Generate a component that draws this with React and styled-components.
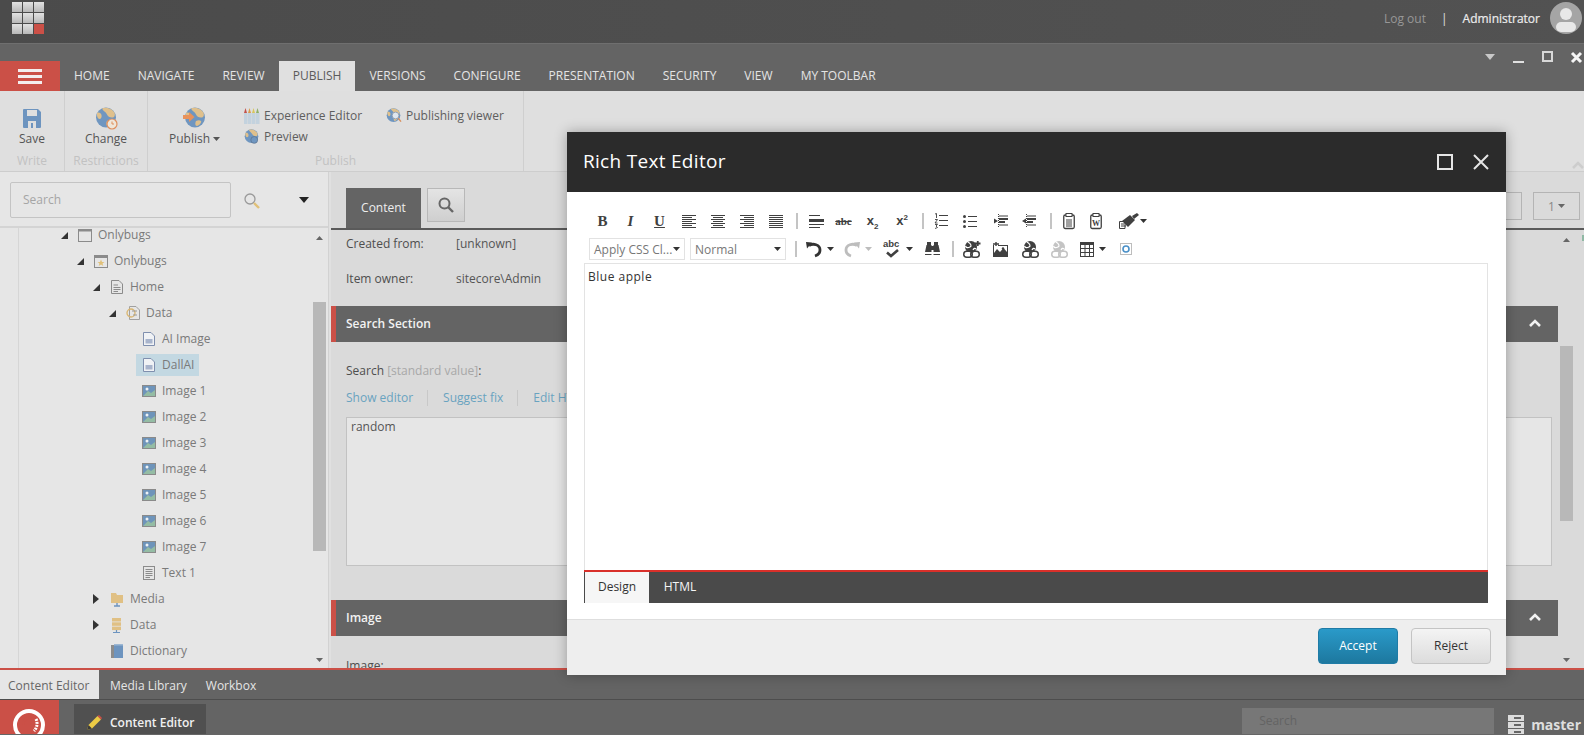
import React from 'react';
import styled, { createGlobalStyle } from 'styled-components';

const GlobalStyle = createGlobalStyle`
  html, body {
    margin: 0;
    padding: 0;
    overflow: hidden;
    background: #666;
  }
  * {
    box-sizing: border-box;
  }
`;

const navItems = ['HOME', 'NAVIGATE', 'REVIEW', 'PUBLISH', 'VERSIONS', 'CONFIGURE', 'PRESENTATION', 'SECURITY', 'VIEW', 'MY TOOLBAR'];

/* ---------- small drawn icons ---------- */

const Svg = ({ w = 16, h = 16, children, ...rest }) => (
  <svg width={w} height={h} viewBox={`0 0 ${w} ${h}`} style={{ display: 'block', overflow: 'visible', flex: 'none' }} {...rest}>
    {children}
  </svg>
);

const Tri = ({ color = '#333', w = 7, h = 4 }) => (
  <Svg w={w} h={h}><path d={`M0 0H${w}L${w / 2} ${h}Z`} fill={color} /></Svg>
);

const Globe = ({ size = 22, badge }) => (
  <Svg w={size} h={size}>
    <g transform={`scale(${size / 22})`}>
      <circle cx="11" cy="10.5" r="10" fill="#6f96c0" />
      <path d="M7 1.5C10 0 16 1 19 5c1.500 2 1 5-1 5.500-3 .5-5-1-6-3C11 5 8 4 7 1.500Z" fill="#dfc08c" />
      <path d="M2 6c2-1 4 0 4.500 2S6 12 4.500 12 1.500 9 2 6ZM12 14c2-1 4-1 5 0s-2 5-4 5-2-3-1-5Z" fill="#dfc08c" />
      {badge === 'clock' && (
        <g>
          <circle cx="17" cy="17" r="5" fill="#efe6d8" stroke="#df8f5c" strokeWidth="1.200" />
          <path d="M17 14.500V17H19" fill="none" stroke="#df8f5c" strokeWidth="1" />
        </g>
      )}
      {badge === 'arrow' && <path d="M-1 8H5V5L10.500 10 5 15V12H-1Z" fill="#e8925c" />}
      {badge === 'lens' && (
        <g>
          <circle cx="14" cy="11" r="5" fill="#dfe6ee" stroke="#8f9db0" strokeWidth="1.400" />
          <path d="M18 15L22 20" stroke="#d98f5c" strokeWidth="2" />
        </g>
      )}
      {badge === 'eye' && <circle cx="15" cy="16" r="5" fill="#6f96c0" stroke="#596f8a" strokeWidth="1" />}
    </g>
  </Svg>
);

const SaveIcon = () => (
  <Svg w={18} h={19}>
    <path fillRule="evenodd" d="M1 0H15L18 3V18A1 1 0 0 1 17 19H1A1 1 0 0 1 0 18V1A1 1 0 0 1 1 0ZM4 1V7H14V1ZM5 12V19H13V12ZM8 14H10V19H8Z" fill="#6d94bf" />
  </Svg>
);

const CrayonIcon = () => (
  <Svg w={15} h={17}>
    {[['#c4524a', 0], ['#d99a4d', 4], ['#d8c65a', 8], ['#8fb06a', 12]].map(([c, x]) => (
      <g key={c}>
        <path d={`M${x} 6L${x + 1.500} 1L${x + 3} 6Z`} fill={c} />
        <rect x={x} y="6" width="3.500" height="11" fill="#c3d2de" />
      </g>
    ))}
  </Svg>
);

const LensIcon = () => (
  <Svg w={16} h={16}>
    <circle cx="6" cy="6" r="5" fill="none" stroke="#9a9a9a" strokeWidth="1.300" />
    <path d="M10 10L15 15" stroke="#e0c078" strokeWidth="2.400" />
  </Svg>
);

const DarkLens = () => (
  <Svg w={16} h={16}>
    <circle cx="6.500" cy="6.500" r="5" fill="none" stroke="#666" strokeWidth="2" />
    <path d="M10 10L15 15" stroke="#666" strokeWidth="2.400" />
  </Svg>
);

const CloseX = ({ size = 16, color = '#e6e6e6', width = 2 }) => (
  <Svg w={size} h={size}>
    <path d={`M1 1L${size - 1} ${size - 1}M${size - 1} 1L1 ${size - 1}`} stroke={color} strokeWidth={width} />
  </Svg>
);

const Chevron = ({ color = '#f2f2f2' }) => (
  <Svg w={12} h={8}>
    <path d="M1 7L6 2 11 7" fill="none" stroke={color} strokeWidth="2.600" />
  </Svg>
);

/* tree icons */
const WindowIcon = () => (
  <Svg w={14} h={14}>
    <rect x=".5" y="1.500" width="13" height="12" fill="none" stroke="#8b8b8b" />
    <rect x=".5" y="1.500" width="13" height="2" fill="#8b8b8b" />
  </Svg>
);

const StarWindow = () => (
  <Svg w={14} h={14}>
    <rect x=".5" y="1.500" width="13" height="12" fill="none" stroke="#8b8b8b" />
    <rect x=".5" y="1.500" width="13" height="2.500" fill="#8b8b8b" />
    <path d="M7 5.500L8 8H10.500L8.500 9.500 9.300 12 7 10.500 4.700 12 5.500 9.500 3.500 8H6Z" fill="#e0c078" />
  </Svg>
);

const DocIcon = () => (
  <Svg w={12} h={14}>
    <path d="M.5.5H8L11.500 4V13.500H.5Z" fill="none" stroke="#8b8b8b" />
    <path d="M2.500 5H7M2.500 7.500H9.500M2.500 9.500H9.500M2.500 11.500H7" stroke="#8b8b8b" />
  </Svg>
);

const DataDocIcon = () => (
  <Svg w={14} h={14}>
    <path d="M3.500.5H10L13.500 4V13.500H3.500Z" fill="none" stroke="#a0a0a0" />
    <circle cx="5" cy="7" r="4" fill="none" stroke="#d9b56f" strokeWidth="1.300" />
    <path d="M6 5H11M7 9H11" stroke="#9a9a9a" />
  </Svg>
);

const BlueDoc = () => (
  <Svg w={12} h={14}>
    <path d="M.5.5H8L11.500 4V13.500H.5Z" fill="#f0f2f5" stroke="#7f8fae" />
    <rect x="2.500" y="7" width="7" height="4.500" fill="#a8b4cc" />
  </Svg>
);

const ImageIcon = () => (
  <Svg w={14} h={12}>
    <rect x=".5" y=".5" width="13" height="11" fill="#6e94ba" stroke="#8a8a8a" />
    <path d="M1 11L6 6 9 8 13 5V11Z" fill="#94bca4" />
    <circle cx="5" cy="4" r="1.500" fill="#eef2f5" />
  </Svg>
);

const TextIcon = () => (
  <Svg w={12} h={14}>
    <rect x=".5" y=".5" width="11" height="13" fill="none" stroke="#8b8b8b" />
    <path d="M2.500 3.500H9.500M2.500 5.500H9.500M2.500 7.500H9.500M2.500 9.500H9.500M2.500 11.500H7" stroke="#8b8b8b" />
  </Svg>
);

const MediaIcon = () => (
  <Svg w={12} h={15}>
    <path d="M0 1H5L6 3H12V11H0Z" fill="#e0c084" />
    <path d="M6 11V14M3 14H9" stroke="#6d94bf" strokeWidth="1.400" />
  </Svg>
);

const ServerIcon = () => (
  <Svg w={10} h={15}>
    <rect x="0" y="0" width="9" height="3.500" fill="#e0c084" />
    <rect x="0" y="4.300" width="9" height="3.500" fill="#e0c084" />
    <rect x="0" y="8.600" width="9" height="3.500" fill="#e0c084" />
    <path d="M4.500 12V14.500M1 14.500H8" stroke="#6d94bf" strokeWidth="1.200" />
  </Svg>
);

const BookIcon = () => (
  <Svg w={12} h={15}>
    <rect x="0" y="1" width="3" height="13" fill="#8c8c8c" />
    <rect x="3" y="1" width="9" height="13" fill="#6d94bf" />
    <rect x="3" y="0" width="9" height="1.500" fill="#9db7d3" />
  </Svg>
);

/* toolbar icons */
const ink = '#404040';

const Lines = ({ rows, width = 1 }) => (
  <Svg w={15} h={13}>
    {rows.map(([a, b], i) => (
      <path key={i} d={`M${a} ${i * (12 / (rows.length - 1)) + 0.5}H${b}`} stroke={ink} strokeWidth={width} />
    ))}
  </Svg>
);

const alignLeft = [[0, 14], [0, 10], [0, 14], [0, 10], [0, 14], [0, 10], [0, 14]];
const alignCenter = [[0, 14], [2, 12], [0, 14], [2, 12], [0, 14], [2, 12], [0, 14]];
const alignRight = [[0, 14], [4, 14], [0, 14], [4, 14], [0, 14], [4, 14], [0, 14]];
const alignFull = [[0, 14], [0, 14], [0, 14], [0, 14], [0, 14], [0, 14], [0, 14]];

const RuleIcon = () => (
  <Svg w={15} h={13}>
    <path d="M0 .5H11M0 12.500H11M0 9.500H15" stroke={ink} />
    <rect x="0" y="4" width="15" height="3" fill={ink} />
  </Svg>
);

const ListOrdered = () => (
  <Svg w={14} h={16}>
    <path d="M1 1L2.500 .5V5M1 6.500H3.500L1 10H3.500M1 11.500H3.500L2 13 3.500 14.500 1 15.500" fill="none" stroke={ink} strokeWidth=".9" />
    <path d="M5 2.500H14M5 7.500H14M5 12.500H14" stroke={ink} />
  </Svg>
);

const ListBullet = () => (
  <Svg w={14} h={13}>
    <circle cx="1.500" cy="1.500" r="1.500" fill={ink} />
    <circle cx="1.500" cy="6.500" r="1.500" fill={ink} />
    <circle cx="1.500" cy="11.500" r="1.500" fill={ink} />
    <path d="M5 1.500H14M5 6.500H14M5 11.500H14" stroke={ink} />
  </Svg>
);

// both buttons keep the lines on the right, only the arrow turns round
const Indent = ({ back }) => (
  <Svg w={14} h={14}>
    <path d={back ? 'M4 4.500L0 7 4 9.500Z' : 'M0 4.500L4 7 0 9.500Z'} fill={ink} />
    <path d="M4.500 0V14" stroke={ink} strokeDasharray="1 1" />
    <path d="M5 2H14" stroke={ink} />
    <rect x="5" y="4" width="9" height="2" fill={ink} />
    <rect x="5" y="7" width="6" height="2" fill={ink} />
    <path d="M5 11H14" stroke={ink} />
  </Svg>
);

const Clipboard = ({ word }) => (
  <Svg w={12} h={16}>
    <rect x=".75" y="2" width="10.500" height="13.500" rx="1.500" fill="none" stroke={ink} strokeWidth="1.300" />
    <rect x="3" y=".5" width="6" height="3" fill="#fff" stroke={ink} />
    {!word && <path d="M3 7H9M3 9H9M3 11H9M3 13H9" stroke={ink} />}
    {word && <text x="6" y="12.500" fontSize="8" fontFamily="Liberation Serif, serif" fontWeight="700" textAnchor="middle" fill={ink}>W</text>}
  </Svg>
);

const BrushIcon = () => (
  <Svg w={20} h={16}>
    <path d="M.5 8.500H6V15.500H.5Z" fill="none" stroke={ink} />
    <path d="M3 8L11 2 16 7 9 14Z" fill={ink} />
    <path d="M13 3L18 0 20 2 15 6Z" fill={ink} />
    <path d="M2 11H5M2 13H7" stroke={ink} />
  </Svg>
);

const UndoIcon = ({ redo, color = '#333' }) => (
  <Svg w={16} h={15}>
    <g transform={redo ? 'translate(16 0) scale(-1 1)' : undefined}>
      <path d="M0 0L6 .5 1 6.500Z" fill={color} />
      <path d="M3 3.500C7 1 14 2.500 14 8c0 3-2 5-5 6" fill="none" stroke={color} strokeWidth="2.800" />
    </g>
  </Svg>
);

const SpellIcon = () => (
  <Svg w={18} h={17}>
    <path d="M4 11.500L8 15 15 9" fill="none" stroke={ink} strokeWidth="2.600" />
  </Svg>
);

const Binoculars = () => (
  <Svg w={15} h={14}>
    <rect x="2" y="0" width="4" height="3" fill={ink} />
    <rect x="9" y="0" width="4" height="3" fill={ink} />
    <path d="M1.500 3H6.500V10H0ZM8.500 3H13.500L15 10H8.500ZM6.500 4H8.500V8H6.500Z" fill={ink} />
    <path d="M0 12.500H6.500M8.500 12.500H15" stroke={ink} />
  </Svg>
);

const LinkGlobe = ({ color = ink, plus }) => (
  <Svg w={17} h={17}>
    <circle cx="8" cy="6" r="6" fill={color} />
    <path d="M5 1C8 3 9 5 7 6S3 7 2.500 5M10 9c1-2 2-2 3-1" fill="none" stroke="#fff" strokeWidth="1.200" />
    <rect x=".75" y="10.250" width="8.500" height="6" rx="3" fill="#fff" stroke={color} strokeWidth="1.500" />
    <rect x="7.750" y="10.250" width="8.500" height="6" rx="3" fill="none" stroke={color} strokeWidth="1.500" />
    {plus && <path d="M12 2.500H17.500M14.750 0V5" stroke={color} strokeWidth="1.800" />}
  </Svg>
);

const PictureIcon = () => (
  <Svg w={15} h={15}>
    <rect x="0" y="3" width="15" height="12" fill={ink} />
    <path d="M1 11L4 7 7 10 10.500 6 14 10V4H5V3H1Z" fill="#fff" />
    <path d="M0 2H6M3 0V4" stroke={ink} strokeWidth="1.400" />
    <circle cx="10" cy="6.500" r="1.200" fill={ink} />
  </Svg>
);

const TableIcon = () => (
  <Svg w={14} h={15}>
    <rect x=".5" y=".5" width="13" height="14" fill="none" stroke={ink} />
    <rect x="0" y="0" width="14" height="3" fill={ink} />
    <path d="M5 3V15M9.500 3V15M0 6.500H14M0 10.500H14" stroke={ink} />
  </Svg>
);

const SelectAll = () => (
  <Svg w={12} h={12}>
    <rect x=".5" y=".5" width="11" height="11" fill="none" stroke="#7a7a7a" strokeDasharray="1 1" />
    <circle cx="6" cy="6" r="3" fill="none" stroke="#4a90c8" strokeWidth="1.600" />
  </Svg>
);

const SitecoreLogo = () => (
  <Svg w={32} h={32}>
    <circle cx="16" cy="16" r="14" fill="none" stroke="#fff" strokeWidth="4" />
    <path d="M10 16a7 7 0 0 1 11-6" fill="none" stroke="#cb5047" strokeWidth="2" />
    <path d="M23 10c2 4 1 9-2 12" fill="none" stroke="#fff" strokeWidth="3" strokeDasharray="2 1" />
  </Svg>
);

const PencilIcon = () => (
  <Svg w={15} h={15}>
    <path d="M0 15L1.500 10 10.500 1 14 4.500 5 13.500Z" fill="#eccb45" />
    <path d="M10.500 1L12 0 15 3 14 4.500Z" fill="#cb5047" />
    <path d="M0 15L1.500 10 5 13.500Z" fill="#3c3c3c" />
  </Svg>
);

const MasterIcon = () => (
  <Svg w={16} h={22}>
    {[0, 7, 14].map((y) => (
      <g key={y}>
        <rect x="0" y={y} width="16" height="6" fill="#dcdcdc" />
        <rect x="6" y={y + 2} width="7" height="2" fill="#666" />
      </g>
    ))}
  </Svg>
);

/* ---------- page ---------- */

const Page = styled.div`
  width: 1584px;
  height: 735px;
  position: relative;
  overflow: hidden;
  display: flex;
  flex-direction: column;
  font-family: 'Open Sans', 'Liberation Sans', sans-serif;
  font-size: 12px;
  color: #555;
`;

const TopBar = styled.header`
  height: 44px;
  flex: none;
  display: flex;
  align-items: flex-start;
  padding: 2px 2px 0 12px;
  background: linear-gradient(to right, #4b4b4b, #525252);
  border-bottom: 1px solid #6f6f6f;
`;

const AppGrid = styled.div`
  display: grid;
  grid-template-columns: repeat(3, 10px);
  grid-auto-rows: 10px;
  gap: 1px;
`;

const AppCell = styled.span`
  background: ${(p) => (p.$red ? '#cb5047' : 'linear-gradient(#e2e2e2, #b8b8b8)')};
`;

const UserArea = styled.div`
  margin-left: auto;
  display: flex;
  align-items: center;
  height: 32px;
`;

const LogOut = styled.span`
  color: #979797;
`;

const Pipe = styled.span`
  color: #e0e0e0;
  margin-left: 15px;
`;

const UserName = styled.span`
  color: #ececec;
  margin-left: 15px;
  -webkit-text-stroke: 0.2px #ececec;
`;

const Avatar = styled.div`
  width: 32px;
  height: 32px;
  margin-left: 10px;
  border-radius: 50%;
  background: #a5a5a5;
  position: relative;
  overflow: hidden;
  &::before {
    content: '';
    position: absolute;
    left: 10px;
    top: 6px;
    width: 12px;
    height: 12px;
    border-radius: 50%;
    background: #e8e8e8;
  }
  &::after {
    content: '';
    position: absolute;
    left: 6px;
    top: 20px;
    width: 20px;
    height: 10px;
    border-radius: 5px;
    background: #e8e8e8;
  }
`;

const NavBar = styled.nav`
  height: 47px;
  flex: none;
  display: flex;
  align-items: flex-end;
  background: #646464;
`;

const MenuButton = styled.div`
  width: 60px;
  height: 30px;
  background: #cb5047;
  display: flex;
  flex-direction: column;
  justify-content: center;
  align-items: center;
  gap: 3px;
  span {
    width: 24px;
    height: 3px;
    background: #f3eeee;
  }
`;

const NavTab = styled.div`
  height: 30px;
  padding: 0 14px;
  line-height: 30px;
  color: ${(p) => (p.$active ? '#5b5b5b' : '#e4e4e4')};
  background: ${(p) => (p.$active ? '#e0e0e0' : 'transparent')};
`;

const WindowControls = styled.div`
  margin-left: auto;
  align-self: flex-start;
  display: flex;
  gap: 18px;
  align-items: center;
  height: 12px;
  margin-top: 7px;
  padding-right: 2px;
`;

const Ribbon = styled.section`
  height: 81px;
  flex: none;
  display: flex;
  background: #dfdfdf;
`;

const RibbonGroup = styled.div`
  width: ${(p) => p.$w}px;
  flex: none;
  display: flex;
  flex-direction: column;
  border-right: 1px solid #cfcfcf;
`;

const GroupBody = styled.div`
  flex: 1;
  display: flex;
`;

const GroupLabel = styled.div`
  text-align: center;
  color: #c2c2c2;
  line-height: 16px;
  padding-bottom: 3px;
`;

const BigButton = styled.div`
  width: ${(p) => p.$w || 'auto'};
  flex: ${(p) => (p.$w ? 'none' : '1')};
  display: flex;
  flex-direction: column;
  align-items: center;
  padding-top: 16px;
`;

const BigIcon = styled.div`
  height: 22px;
  display: flex;
  align-items: center;
`;

const BigText = styled.div`
  margin-top: 2px;
  line-height: 16px;
  color: #555;
  display: flex;
  align-items: center;
  gap: 3px;
`;

const SmallColumn = styled.div`
  width: ${(p) => p.$w}px;
  flex: none;
  padding: 14px 0 0 ${(p) => p.$pl || 0}px;
`;

const SmallButton = styled.div`
  height: 21px;
  display: flex;
  align-items: center;
  gap: 5px;
  color: #5e5e5e;
`;

const SmallIcon = styled.div`
  width: 16px;
  display: flex;
  justify-content: center;
`;

const RibbonCollapse = styled.div`
  align-self: flex-end;
  margin: 0 0 3px auto;
`;

const Main = styled.div`
  height: 497px;
  flex: none;
  display: flex;
  border-top: 1px solid #cdcdcd;
  margin-top: -1px;
`;

const LeftPanel = styled.aside`
  width: 328px;
  flex: none;
  display: flex;
  flex-direction: column;
  background: #e6e6e6;
`;

const SearchRow = styled.div`
  height: 56px;
  flex: none;
  display: flex;
  align-items: flex-start;
  padding: 10px 0 0 10px;
  border-bottom: 2px solid #d4d4d4;
`;

const SearchInput = styled.div`
  width: 221px;
  height: 36px;
  line-height: 34px;
  padding-left: 12px;
  border: 1px solid #c4c4c4;
  border-radius: 2px;
  color: #a5a5a5;
`;

const SearchGlass = styled.div`
  margin: 11px 0 0 13px;
`;

const SearchCaret = styled.div`
  margin: 15px 0 0 39px;
`;

const TreeWrap = styled.div`
  flex: 1;
  min-height: 0;
  display: flex;
`;

const TreeBody = styled.div`
  flex: 1;
  overflow: hidden;
  margin-left: 18px;
  border-left: 1px solid #d6d6d6;
`;

const TreeList = styled.div`
  margin-top: -6px;
  margin-left: -19px;
`;

const TreeRow = styled.div`
  height: 26px;
  display: flex;
  align-items: center;
  padding-left: ${(p) => 60 + p.$level * 16}px;
`;

const Arrow = styled.span`
  width: 8px;
  flex: none;
  display: flex;
  justify-content: center;
`;

const TreeItem = styled.span`
  margin-left: 4px;
  height: 22px;
  padding: 0 5px;
  display: inline-flex;
  align-items: center;
  gap: 5px;
  color: #7a7a7a;
  background: ${(p) => (p.$selected ? '#c3d8e2' : 'transparent')};
`;

const TreeIconSlot = styled.span`
  width: 16px;
  display: flex;
  justify-content: center;
`;

const TreeText = styled.span`
  margin-top: -2px;
`;

const ScrollTrack = styled.div`
  width: ${(p) => p.$w}px;
  flex: none;
  display: flex;
  flex-direction: column;
  padding: 8px 2px 6px;
  position: relative;
  background: ${(p) => p.$bg};
`;

const ScrollArrow = styled.div`
  display: flex;
  width: 13px;
  justify-content: center;
  transform: ${(p) => (p.$down ? 'rotate(180deg)' : 'none')};
  margin-top: ${(p) => (p.$down ? 'auto' : '0')};
`;

const ScrollThumb = styled.div`
  width: 13px;
  height: ${(p) => p.$h}px;
  margin-top: ${(p) => p.$top}px;
  background: #b8b8b8;
`;

const Splitter = styled.div`
  width: 3px;
  flex: none;
  background: #e0e0e0;
  border-left: 1px solid #d2d2d2;
`;

const RightPanel = styled.main`
  flex: 1;
  min-width: 0;
  display: flex;
  flex-direction: column;
  background: #dadada;
`;

const EditorTabs = styled.div`
  height: 58px;
  flex: none;
  display: flex;
  align-items: flex-start;
  padding: 16px 4px 0 15px;
  border-bottom: 2px solid #5a5a5a;
`;

const ContentTab = styled.div`
  width: 75px;
  height: 40px;
  line-height: 40px;
  text-align: center;
  background: #646464;
  color: #eee;
`;

const GlassButton = styled.div`
  width: 38px;
  height: 34px;
  margin-left: 6px;
  display: flex;
  align-items: center;
  justify-content: center;
  border: 1px solid #b8b8b8;
  background: linear-gradient(#e4e4e4, #cfcfcf);
`;

const PagerButton = styled.div`
  width: ${(p) => p.$w}px;
  height: 28px;
  margin: 4px 0 0 ${(p) => p.$ml};
  display: flex;
  align-items: center;
  justify-content: center;
  gap: 3px;
  border: 1px solid #b4b4b4;
  color: #888;
`;

const EditorWrap = styled.div`
  flex: 1;
  min-height: 0;
  display: flex;
`;

const EditorBody = styled.div`
  flex: 1;
  min-width: 0;
  overflow: hidden;
  padding-top: 6px;
`;

const InfoRow = styled.div`
  display: flex;
  line-height: 16px;
  padding-left: 15px;
  margin-bottom: 19px;
  color: #555;
`;

const InfoLabel = styled.span`
  width: 110px;
  color: #4e4e4e;
`;

const SectionHead = styled.div`
  height: 36px;
  display: flex;
  align-items: center;
  padding: 0 15px 2px 10px;
  background: #646464;
  border-left: 5px solid #cb5047;
  color: #f2f2f2;
  font-weight: 600;
  margin-top: ${(p) => p.$mt || 0}px;
`;

const HeadChevron = styled.span`
  margin-left: auto;
  width: 16px;
  display: flex;
  justify-content: center;
`;

const FieldLabel = styled.div`
  padding-left: 15px;
  margin-top: ${(p) => p.$mt}px;
  line-height: 16px;
  color: #4e4e4e;
  span {
    color: #a8a8a8;
  }
`;

const FieldLinks = styled.div`
  display: flex;
  margin: 11px 0 11px 15px;
  line-height: 16px;
  color: #69a3c0;
`;

const FieldLink = styled.span`
  padding-right: 14px;
  margin-right: 15px;
  border-right: ${(p) => (p.$last ? 'none' : '1px solid #c8c8c8')};
`;

const FieldBox = styled.div`
  height: 149px;
  margin: 0 6px 0 15px;
  padding: 1px 4px;
  border: 1px solid #c2c2c2;
  background: #e6e6e6;
  color: #555;
  line-height: 16px;
`;

const GreenMark = styled.span`
  position: absolute;
  right: 0;
  top: 5px;
  width: 2px;
  height: 6px;
  background: #8fb8a4;
`;

const SpinBar = styled.div`
  height: 2px;
  flex: none;
  background: #cb5047;
`;

const AppTabs = styled.div`
  height: 29px;
  flex: none;
  display: flex;
  background: #646464;
`;

const AppTab = styled.div`
  width: ${(p) => (p.$w ? `${p.$w}px` : 'auto')};
  line-height: 31px;
  padding: 0 ${(p) => p.$pad}px;
  color: ${(p) => (p.$active ? '#666' : '#e6e6e6')};
  background: ${(p) => (p.$active ? '#e6e6e6' : 'transparent')};
`;

const TaskBar = styled.footer`
  height: 35px;
  flex: none;
  display: flex;
  align-items: flex-end;
  background: #646464;
  border-top: 1px solid #4d4d4d;
  overflow: hidden;
`;

const BrandTile = styled.div`
  width: 59px;
  height: 34px;
  background: #cb5047;
  padding: 9px 0 0 13px;
  flex: none;
`;

const TaskItem = styled.div`
  width: 132px;
  height: 30px;
  margin-left: 15px;
  display: flex;
  align-items: center;
  gap: 8px;
  padding: 6px 0 0 13px;
  background: #505050;
  color: #f0f0f0;
  font-weight: 600;
`;

const TaskSearch = styled.div`
  width: 252px;
  height: 26px;
  margin-left: auto;
  padding-left: 17px;
  line-height: 26px;
  background: #777;
  color: #636363;
`;

const Database = styled.div`
  display: flex;
  align-items: flex-start;
  gap: 7px;
  height: 26px;
  margin: 0 3px 0 14px;
  padding-top: 7px;
  color: #dedede;
  font-size: 14px;
  font-weight: 700;
  line-height: 20px;
`;

/* ---------- dialog, lies over the dimmed page ---------- */

const Dialog = styled.div`
  position: absolute;
  left: 567px;
  top: 132px;
  width: 939px;
  height: 543px;
  display: flex;
  flex-direction: column;
  background: #fff;
  box-shadow: 0 0 12px rgba(0, 0, 0, 0.3);
`;

const DialogHead = styled.div`
  height: 60px;
  flex: none;
  display: flex;
  align-items: center;
  padding: 0 17px 0 16px;
  background: #2b2b2b;
  color: #fff;
  font-size: 19px;
  letter-spacing: 0.3px;
`;

const DialogTitle = styled.span`
  margin-top: -3px;
`;

const HeadActions = styled.div`
  margin-left: auto;
  display: flex;
  gap: 20px;
`;

const MaxBox = styled.span`
  width: 16px;
  height: 16px;
  border: 2px solid #e6e6e6;
`;

const DialogBody = styled.div`
  flex: 1;
  min-height: 0;
  display: flex;
  flex-direction: column;
  padding: 17px 18px 16px 17px;
`;

const ToolRow = styled.div`
  height: 24px;
  flex: none;
  display: flex;
  align-items: center;
  padding-left: ${(p) => p.$pl}px;
  margin-bottom: ${(p) => p.$mb || 0}px;
`;

const Tool = styled.span`
  width: ${(p) => p.$w}px;
  margin-left: ${(p) => p.$ml || 0}px;
  height: 24px;
  flex: none;
  display: flex;
  align-items: center;
  justify-content: center;
  color: ${(p) => p.$color || '#404040'};
`;

const Sep = styled.span`
  width: ${(p) => p.$w}px;
  height: 16px;
  flex: none;
  display: flex;
  justify-content: center;
  &::after {
    content: '';
    width: 2px;
    background: #c4c4c4;
  }
`;

const SerifGlyph = styled.span`
  font-family: 'Liberation Serif', serif;
  font-size: ${(p) => p.$size || 15}px;
  font-weight: 700;
  font-style: ${(p) => (p.$italic ? 'italic' : 'normal')};
  text-decoration: ${(p) => p.$deco || 'none'};
  line-height: 16px;
`;

const ScriptGlyph = styled.span`
  font-family: 'Liberation Sans', sans-serif;
  font-size: 13px;
  font-weight: 700;
  line-height: 16px;
  sub, sup {
    font-size: 8px;
    line-height: 0;
  }
`;

const SelectBox = styled.div`
  width: 96px;
  height: 22px;
  margin-right: ${(p) => p.$mr || 0}px;
  padding: 0 4px;
  display: flex;
  align-items: center;
  justify-content: space-between;
  border: 1px solid #e2e2e2;
  color: #777;
  flex: none;
`;

const SpellWrap = styled.span`
  position: relative;
  display: block;
  width: 18px;
  height: 17px;
`;

const SpellText = styled.span`
  position: absolute;
  left: 0;
  top: -3px;
  font-family: 'Liberation Sans', sans-serif;
  font-size: 9.500px;
  font-weight: 700;
  color: #404040;
`;

const EditArea = styled.div`
  height: 307px;
  flex: none;
  margin-top: 2px;
  padding: 5px 3px;
  border: 1px solid #e3e3e3;
  border-bottom: none;
  color: #333;
  line-height: 16px;
  letter-spacing: 0.5px;
`;

const ModeBar = styled.div`
  height: 33px;
  flex: none;
  display: flex;
  background: #4a4a4a;
  border-top: 2px solid #d9302a;
`;

const ModeTab = styled.div`
  width: ${(p) => p.$w}px;
  margin-left: ${(p) => (p.$active ? '1px' : '0')};
  line-height: 29px;
  text-align: center;
  color: ${(p) => (p.$active ? '#333' : '#f5f5f5')};
  background: ${(p) => (p.$active ? '#f6f6f6' : 'transparent')};
`;

const ModeBarWrap = styled.div`
  background: #fff;
`;

const DialogFoot = styled.div`
  height: 56px;
  flex: none;
  display: flex;
  justify-content: flex-end;
  gap: 13px;
  padding: 8px 15px 0 0;
  background: #eee;
  border-top: 1px solid #dedede;
`;

const FootButton = styled.div`
  width: 80px;
  height: 36px;
  line-height: 34px;
  text-align: center;
  border-radius: 4px;
  border: 1px solid ${(p) => (p.$primary ? '#1f7ba6' : '#c4c4c4')};
  background: ${(p) => (p.$primary ? 'linear-gradient(#2a9ac9, #1d789f)' : 'linear-gradient(#f4f4f4, #dcdcdc)')};
  color: ${(p) => (p.$primary ? '#fff' : '#333')};
`;

/* ---------- data ---------- */

const imageRows = [1, 2, 3, 4, 5, 6, 7].map((n) => ({ level: 4, icon: <ImageIcon />, label: `Image ${n}` }));

const treeRows = [
  { level: 0, open: true, icon: <WindowIcon />, label: 'Onlybugs' },
  { level: 1, open: true, icon: <StarWindow />, label: 'Onlybugs' },
  { level: 2, open: true, icon: <DocIcon />, label: 'Home' },
  { level: 3, open: true, icon: <DataDocIcon />, label: 'Data' },
  { level: 4, icon: <BlueDoc />, label: 'AI Image' },
  { level: 4, icon: <BlueDoc />, label: 'DallAI', selected: true },
  ...imageRows,
  { level: 4, icon: <TextIcon />, label: 'Text 1' },
  { level: 2, closed: true, icon: <MediaIcon />, label: 'Media' },
  { level: 2, closed: true, icon: <ServerIcon />, label: 'Data' },
  { level: 2, icon: <BookIcon />, label: 'Dictionary' },
];

const TreeArrow = ({ open, closed }) => (
  <Arrow>
    {open && (
      <Svg w={7} h={7}><path d="M7 0V7H0Z" fill="#333" /></Svg>
    )}
    {closed && (
      <Svg w={6} h={10}><path d="M0 0L6 5 0 10Z" fill="#333" /></Svg>
    )}
  </Arrow>
);

const App = () => (
  <Page>
    <GlobalStyle />
    <TopBar>
      <AppGrid>
        {[...Array(9)].map((_, i) => <AppCell key={i} $red={i === 8} />)}
      </AppGrid>
      <UserArea>
        <LogOut>Log out</LogOut>
        <Pipe>|</Pipe>
        <UserName>Administrator</UserName>
        <Avatar />
      </UserArea>
    </TopBar>

    <NavBar>
      <MenuButton><span /><span /><span /></MenuButton>
      {navItems.map((item) => (
        <NavTab key={item} $active={item === 'PUBLISH'}>{item}</NavTab>
      ))}
      <WindowControls>
        <Tri color="#c8c8c8" w={10} h={6} />
        <Svg w={11} h={12}><path d="M0 11H11" stroke="#e0e0e0" strokeWidth="2" /></Svg>
        <Svg w={11} h={12}><rect x="1" y="1" width="9" height="9" fill="none" stroke="#d8d8d8" strokeWidth="2" /></Svg>
        <CloseX size={11} color="#f5f5f5" width={3} />
      </WindowControls>
    </NavBar>

    <Ribbon>
      <RibbonGroup $w={65}>
        <GroupBody>
          <BigButton>
            <BigIcon><SaveIcon /></BigIcon>
            <BigText>Save</BigText>
          </BigButton>
        </GroupBody>
        <GroupLabel>Write</GroupLabel>
      </RibbonGroup>
      <RibbonGroup $w={83}>
        <GroupBody>
          <BigButton>
            <BigIcon><Globe size={22} badge="clock" /></BigIcon>
            <BigText>Change</BigText>
          </BigButton>
        </GroupBody>
        <GroupLabel>Restrictions</GroupLabel>
      </RibbonGroup>
      <RibbonGroup $w={376}>
        <GroupBody>
          <BigButton $w="93px">
            <BigIcon><Globe size={22} badge="arrow" /></BigIcon>
            <BigText>Publish <Tri color="#555" /></BigText>
          </BigButton>
          <SmallColumn $w={144} $pl={2}>
            <SmallButton><SmallIcon><CrayonIcon /></SmallIcon>Experience Editor</SmallButton>
            <SmallButton><SmallIcon><Globe size={15} badge="eye" /></SmallIcon>Preview</SmallButton>
          </SmallColumn>
          <SmallColumn $w={120}>
            <SmallButton><SmallIcon><Globe size={15} badge="lens" /></SmallIcon>Publishing viewer</SmallButton>
          </SmallColumn>
        </GroupBody>
        <GroupLabel>Publish</GroupLabel>
      </RibbonGroup>
      <RibbonCollapse><Chevron color="#cdcdcd" /></RibbonCollapse>
    </Ribbon>

    <Main>
      <LeftPanel>
        <SearchRow>
          <SearchInput>Search</SearchInput>
          <SearchGlass><LensIcon /></SearchGlass>
          <SearchCaret><Tri color="#222" w={10} h={6} /></SearchCaret>
        </SearchRow>
        <TreeWrap>
          <TreeBody>
            <TreeList>
              {treeRows.map((row, i) => (
                <TreeRow key={i} $level={row.level}>
                  <TreeArrow open={row.open} closed={row.closed} />
                  <TreeItem $selected={row.selected}>
                    <TreeIconSlot>{row.icon}</TreeIconSlot>
                    <TreeText>{row.label}</TreeText>
                  </TreeItem>
                </TreeRow>
              ))}
            </TreeList>
          </TreeBody>
          <ScrollTrack $w={17} $bg="#e6e6e6">
            <ScrollArrow><Svg w={7} h={4}><path d="M0 4H7L3.500 0Z" fill="#666" /></Svg></ScrollArrow>
            <ScrollThumb $top={62} $h={249} />
            <ScrollArrow $down><Svg w={7} h={4}><path d="M0 4H7L3.500 0Z" fill="#666" /></Svg></ScrollArrow>
          </ScrollTrack>
        </TreeWrap>
      </LeftPanel>
      <Splitter />
      <RightPanel>
        <EditorTabs>
          <ContentTab>Content</ContentTab>
          <GlassButton><DarkLens /></GlassButton>
          <PagerButton $w={60} $ml="auto" />
          <PagerButton $w={47} $ml="11px">1<Tri color="#666" /></PagerButton>
        </EditorTabs>
        <EditorWrap>
          <EditorBody>
            <InfoRow><InfoLabel>Created from:</InfoLabel>[unknown]</InfoRow>
            <InfoRow><InfoLabel>Item owner:</InfoLabel>sitecore\Admin</InfoRow>
            <SectionHead>Search Section<HeadChevron><Chevron /></HeadChevron></SectionHead>
            <FieldLabel $mt={21}>Search <span>[standard value]</span>:</FieldLabel>
            <FieldLinks>
              <FieldLink>Show editor</FieldLink>
              <FieldLink>Suggest fix</FieldLink>
              <FieldLink $last>Edit HTML</FieldLink>
            </FieldLinks>
            <FieldBox>random</FieldBox>
            <SectionHead $mt={34}>Image<HeadChevron><Chevron /></HeadChevron></SectionHead>
            <FieldLabel $mt={22}>Image:</FieldLabel>
          </EditorBody>
          <ScrollTrack $w={26} $bg="#dadada">
            <ScrollArrow><Svg w={7} h={4}><path d="M0 4H7L3.500 0Z" fill="#666" /></Svg></ScrollArrow>
            <GreenMark />
            <ScrollThumb $top={104} $h={175} />
            <ScrollArrow $down><Svg w={7} h={4}><path d="M0 4H7L3.500 0Z" fill="#666" /></Svg></ScrollArrow>
          </ScrollTrack>
        </EditorWrap>
      </RightPanel>
    </Main>

    <SpinBar />
    <AppTabs>
      <AppTab $active $pad={8} $w={99}>Content Editor</AppTab>
      <AppTab $pad={11}>Media Library</AppTab>
      <AppTab $pad={8}>Workbox</AppTab>
    </AppTabs>
    <TaskBar>
      <BrandTile><SitecoreLogo /></BrandTile>
      <TaskItem><PencilIcon />Content Editor</TaskItem>
      <TaskSearch>Search</TaskSearch>
      <Database><MasterIcon />master</Database>
    </TaskBar>

    <Dialog>
      <DialogHead>
        <DialogTitle>Rich Text Editor</DialogTitle>
        <HeadActions>
          <MaxBox />
          <CloseX size={16} />
        </HeadActions>
      </DialogHead>
      <DialogBody>
        <ToolRow $pl={4} $mb={4}>
          <Tool $w={29}><SerifGlyph>B</SerifGlyph></Tool>
          <Tool $w={27}><SerifGlyph $italic>I</SerifGlyph></Tool>
          <Tool $w={31}><SerifGlyph $deco="underline">U</SerifGlyph></Tool>
          <Tool $w={29}><Lines rows={alignLeft} /></Tool>
          <Tool $w={29}><Lines rows={alignCenter} /></Tool>
          <Tool $w={29}><Lines rows={alignRight} /></Tool>
          <Tool $w={29}><Lines rows={alignFull} /></Tool>
          <Sep $w={12} />
          <Tool $w={26}><RuleIcon /></Tool>
          <Tool $w={29}><SerifGlyph $size={11} $deco="line-through">abc</SerifGlyph></Tool>
          <Tool $w={29}><ScriptGlyph>x<sub>2</sub></ScriptGlyph></Tool>
          <Tool $w={30}><ScriptGlyph>x<sup>2</sup></ScriptGlyph></Tool>
          <Sep $w={12} />
          <Tool $w={24}><ListOrdered /></Tool>
          <Tool $w={34}><ListBullet /></Tool>
          <Tool $w={28}><Indent /></Tool>
          <Tool $w={28}><Indent back /></Tool>
          <Sep $w={16} />
          <Tool $w={20}><Clipboard /></Tool>
          <Tool $w={34}><Clipboard word /></Tool>
          <Tool $w={28} $ml={2}><BrushIcon /></Tool>
          <Tool $w={0}><Tri /></Tool>
        </ToolRow>
        <ToolRow $pl={5}>
          <SelectBox $mr={5}>Apply CSS Cl...<Tri /></SelectBox>
          <SelectBox>Normal<Tri /></SelectBox>
          <Sep $w={20} />
          <Tool $w={16}><UndoIcon /></Tool>
          <Tool $w={16}><Tri /></Tool>
          <Tool $w={28}><UndoIcon redo color="#bdbdbd" /></Tool>
          <Tool $w={4}><Tri color="#bdbdbd" /></Tool>
          <Tool $w={28} $ml={8}>
            <SpellWrap><SpellText>abc</SpellText><SpellIcon /></SpellWrap>
          </Tool>
          <Tool $w={6}><Tri /></Tool>
          <Tool $w={40}><Binoculars /></Tool>
          <Sep $w={2} />
          <Tool $w={34}><LinkGlobe plus /></Tool>
          <Tool $w={24}><PictureIcon /></Tool>
          <Tool $w={36}><LinkGlobe /></Tool>
          <Tool $w={22}><LinkGlobe color="#c4c4c4" /></Tool>
          <Tool $w={26} $ml={4}><TableIcon /></Tool>
          <Tool $w={4}><Tri /></Tool>
          <Tool $w={44}><SelectAll /></Tool>
        </ToolRow>
        <EditArea>Blue apple</EditArea>
        <ModeBarWrap>
          <ModeBar>
            <ModeTab $active $w={64}>Design</ModeTab>
            <ModeTab $w={62}>HTML</ModeTab>
          </ModeBar>
        </ModeBarWrap>
      </DialogBody>
      <DialogFoot>
        <FootButton $primary>Accept</FootButton>
        <FootButton>Reject</FootButton>
      </DialogFoot>
    </Dialog>
  </Page>
);

export default App;
